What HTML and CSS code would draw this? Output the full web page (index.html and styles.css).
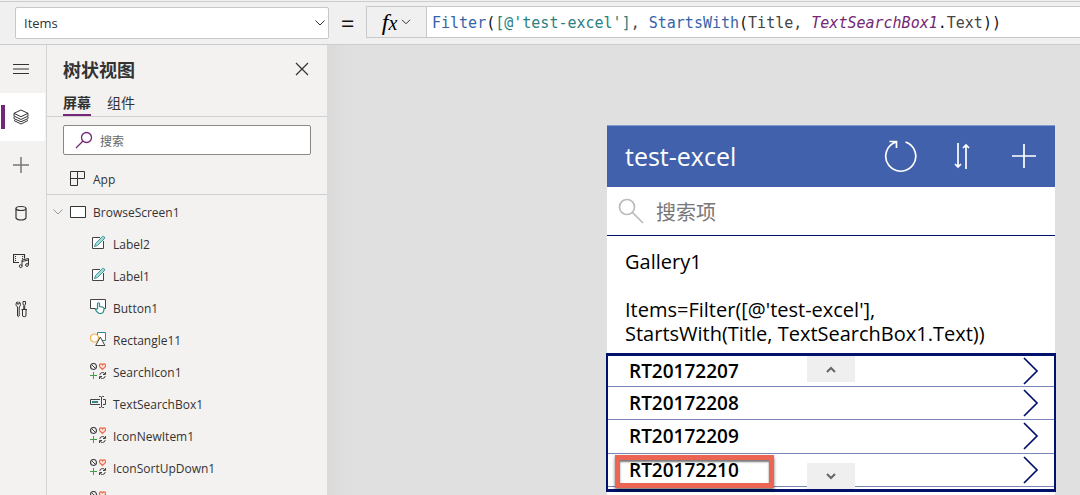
FILE: index.html
```html
<!DOCTYPE html>
<html lang="zh-CN">
<head>
<meta charset="utf-8">
<title>test-excel</title>
<link rel="stylesheet" href="styles.css">
</head>
<body>
<svg class="sprite" aria-hidden="true">
  <symbol id="edit" viewBox="0 0 16 16">
    <path d="M10 2.500H2.500v11h11V6" fill="#fff" stroke="#444"/>
    <path d="M4.500 11.500l1-3L12.500 1.500q1.500-.5 2 .5t-.5 2L7.500 10.500z" fill="#a8d8d8" stroke="#38999b"/>
  </symbol>
  <symbol id="button" viewBox="0 0 16 16">
    <path d="M5.500 9.500H.5v-9h15v9h-2" fill="#fff" stroke="#444"/>
    <path d="M7.500 10V4.500q1-1.500 2 0V7.500l3.500.7q1 .3 1 1.500-.2 4.800-3.500 4.800H9Q6.500 13 5.300 10.200q.5-1 2.200.3" fill="#fff" stroke="#2b8c8c" stroke-width="1.200"/>
  </symbol>
  <symbol id="shapes" viewBox="0 0 16 16">
    <path d="M7.500 1.500h8v8h-8z" fill="#fff" stroke="#2b8c8c"/>
    <circle cx="4.500" cy="7" r="4" fill="#fff" stroke="#f2b04c" stroke-width="1.200"/>
    <path d="M5.700 14.500L10.300 6l4.600 8.500z" fill="#fff" stroke="#444"/>
  </symbol>
  <symbol id="icons" viewBox="0 0 16 16">
    <circle cx="3.500" cy="3.500" r="3" fill="none" stroke="#444" stroke-width="1.200"/>
    <path d="M1.500 1.500l4 4" stroke="#444"/>
    <path d="M12.500 6.500L9.700 3.700Q9 2 10.200 1.100q1.400-.7 2.300.9.900-1.600 2.300-.9Q16 2 15.300 3.700z" fill="#fbe9e4" stroke="#ea6a4a" stroke-width="1.200"/>
    <path d="M3.500 9v7M0 12.500h7" stroke="#4a9b4a"/>
    <path d="M9.700 12q.4-2.500 3-2.500 1.500 0 2.500 1.500M15.500 9v2.500H13M15.300 13q-.4 2.500-3 2.500-1.500 0-2.500-1.500M9.500 16v-2.500H12" fill="none" stroke="#444"/>
  </symbol>
  <symbol id="textbox" viewBox="0 0 16 16">
    <path d="M10 4.500H.5v5H10M13 4.500h2.500v5H13" fill="none" stroke="#444"/>
    <path d="M2 6h6v2H2z" fill="#2b8c8c"/>
    <path d="M9 1.500h1.500l1 .7 1-.7H14M11.500 2v10M9 12.500h1.500l1-.7 1 .7H14" fill="none" stroke="#444"/>
  </symbol>
  <symbol id="next" viewBox="0 0 16 28">
    <path d="M1 1l13 13L1 27" fill="none" stroke="#00126b" stroke-width="1.700"/>
  </symbol>
</svg>

<div class="studio">
  <header class="formula-bar">
    <select class="property" aria-label="属性"><option>Items</option></select>
    <span class="equals">=</span>
    <div class="formula">
      <button class="fx" aria-label="fx"><i>f<small>x</small></i><svg width="10" height="6" viewBox="0 0 10 6"><path d="M1 .8l4 4 4-4" fill="none" stroke="#333"/></svg></button>
      <code class="code" tabindex="0"><span class="fn">Filter</span>(<span class="src">[@'test-excel']</span><span class="id">,</span> <span class="fn">StartsWith</span>(<span class="id">Title,</span> <span class="ctl">TextSearchBox1</span>.<span class="id">Text</span>))</code>
    </div>
  </header>

  <div class="workspace">
    <nav class="rail" aria-label="导航">
      <button aria-label="菜单"><svg width="16" height="16"><path d="M0 3.500h16M0 8h16M0 12.500h16" stroke="#333"/></svg></button>
      <button class="active" aria-label="树状视图"><svg width="16" height="16" fill="none" stroke="#333"><path d="M8 1l7 3.300L8 7.700 1 4.300zM1 4.300V7l7 3.500L15 7V4.300M1 7.700v2l7 3 7-3v-2M1 11.500L8 15l7-3.500"/></svg></button>
      <button aria-label="插入"><svg width="16" height="16"><path d="M8 0v16M0 8h16" stroke="#777" stroke-width="1.500"/></svg></button>
      <button aria-label="数据"><svg width="12" height="16" fill="none" stroke="#333" stroke-width="1.200"><ellipse cx="6" cy="3.500" rx="5" ry="2"/><path d="M1 3.500V13q1 2 5 2t5-2V3.500"/></svg></button>
      <button aria-label="媒体"><svg width="16" height="16" fill="none" stroke="#333"><path d="M6 9.500H.5v-8h11v4" stroke-width="1.200"/><path d="M2.500 3v6M9.500 3v3" stroke-dasharray="1 1"/><path d="M9 13V7l6.500-1.500v6M9 8.500L15.500 7"/><circle cx="7.700" cy="13.200" r="1.400"/><circle cx="14" cy="12" r="1.400"/></svg></button>
      <button aria-label="高级工具"><svg width="12" height="18" fill="none" stroke="#333"><path d="M2.500 7Q1 6 1 4.500T2.200 1.800V4h2V1.800Q5.500 3 5.500 4.500T4.200 7v9q-.9 1.500-1.700 0zM8 1.500h2.500V4L9.700 5.500V9H8.800V5.500L8 4zM6.500 9.500H12M7.500 10v6q1.800 1.500 3.500 0v-6"/></svg></button>
    </nav>

    <aside class="panel">
      <div class="panel-head">
        <h1>树状视图</h1>
        <button aria-label="关闭"><svg width="14" height="14"><path d="M1 1l12 12M13 1L1 13" stroke="#333" stroke-width="1.200"/></svg></button>
      </div>
      <div class="tabs" role="tablist">
        <button class="selected" role="tab" aria-selected="true">屏幕</button>
        <button role="tab" aria-selected="false">组件</button>
      </div>
      <label class="find">
        <svg width="18" height="18" fill="none" stroke="#742774" stroke-width="1.300"><circle cx="11.500" cy="6.500" r="5"/><path d="M8 10l-7 7"/></svg>
        <input type="text" placeholder="搜索" aria-label="搜索">
      </label>
      <div class="app-row"><svg width="16" height="16" fill="none" stroke="#333"><path d="M.5.500h14v7h-7v7h-7zM7.500.500v7h-7"/></svg>App</div>
      <div class="tree">
        <div class="node screen"><svg width="10" height="6"><path d="M.5.500l4.500 4.500L9.500.500" fill="none" stroke="#999"/></svg><svg width="16" height="12"><path d="M.5.500h15v11H.5z" fill="#fff" stroke="#333"/></svg>BrowseScreen1</div>
        <div class="node"><svg class="glyph"><use href="#edit"/></svg>Label2</div>
        <div class="node"><svg class="glyph"><use href="#edit"/></svg>Label1</div>
        <div class="node"><svg class="glyph"><use href="#button"/></svg>Button1</div>
        <div class="node"><svg class="glyph"><use href="#shapes"/></svg>Rectangle11</div>
        <div class="node"><svg class="glyph"><use href="#icons"/></svg>SearchIcon1</div>
        <div class="node"><svg class="glyph"><use href="#textbox"/></svg>TextSearchBox1</div>
        <div class="node"><svg class="glyph"><use href="#icons"/></svg>IconNewItem1</div>
        <div class="node"><svg class="glyph"><use href="#icons"/></svg>IconSortUpDown1</div>
        <div class="node"><svg class="glyph"><use href="#icons"/></svg></div>
      </div>
    </aside>

    <main class="canvas">
      <section class="app">
        <header class="app-bar">
          <h2>test-excel</h2>
          <button aria-label="刷新"><svg width="34" height="34" fill="none" stroke="#fff" stroke-width="1.700"><path d="M21.500 3A15 15 0 1 1 12 3M5.500 2.500h7V9"/></svg></button>
          <button aria-label="排序"><svg width="16" height="28" fill="none" stroke="#fff" stroke-width="1.700"><path d="M4 1v24M1 22l3 3 3-3M12 27V3M9 6l3-3 3 3"/></svg></button>
          <button aria-label="新建"><svg width="24" height="24"><path d="M12 0v24M0 12h24" stroke="#fff" stroke-width="1.700"/></svg></button>
        </header>
        <label class="app-search">
          <svg width="26" height="26" fill="none" stroke="#bbb" stroke-width="1.700"><circle cx="9" cy="9" r="7.500"/><path d="M14.500 14.500L25 25"/></svg>
          <input type="text" placeholder="搜索项" aria-label="搜索项">
        </label>
        <p class="note">Gallery1<br><br>Items=Filter([@'test-excel'],<br>StartsWith(Title, TextSearchBox1.Text))</p>
        <div class="gallery">
          <div class="item">RT20172207<svg class="next"><use href="#next"/></svg></div>
          <div class="item">RT20172208<svg class="next"><use href="#next"/></svg></div>
          <div class="item">RT20172209<svg class="next"><use href="#next"/></svg></div>
          <div class="item">RT20172210<svg class="next"><use href="#next"/></svg></div>
          <button class="scroll up" aria-label="向上"><svg width="10" height="7"><path d="M1 6l4-4 4 4" fill="none" stroke="#666" stroke-width="2"/></svg></button>
          <button class="scroll down" aria-label="向下"><svg width="10" height="7"><path d="M1 1l4 4 4-4" fill="none" stroke="#666" stroke-width="2"/></svg></button>
          <div class="highlight"></div>
        </div>
      </section>
    </main>
  </div>
</div>
</body>
</html>
```
FILE: styles.css
```css
* { box-sizing: border-box; }
body {
  margin: 0;
  color: #333;
  font-family: "Open Sans", "Noto Sans CJK SC", sans-serif;
  font-size: 12px;
}
button {
  display: flex;
  align-items: center;
  justify-content: center;
  padding: 0;
  border: 0;
  background: none;
  color: inherit;
  font: inherit;
}
h1, h2, p { margin: 0; }
svg { flex: none; }
.sprite { position: absolute; width: 0; height: 0; }
.studio {
  display: flex;
  flex-direction: column;
  height: 100vh;
  overflow: hidden;
}

.formula-bar {
  display: flex;
  flex: none;
  align-items: center;
  height: 45px;
  padding: 2px 0 0 15px;
  border-bottom: 1px solid #ccc;
  background: linear-gradient(#ccc, #ccc) 0 1px / 100% 1px no-repeat #f0f0f0;
}
.property {
  width: 314px;
  height: 32px;
  padding: 0 8px;
  border: 1px solid #c8c8c8;
  border-radius: 2px;
  appearance: none;
  background: #fff url("data:image/svg+xml,%3Csvg xmlns='http://www.w3.org/2000/svg' width='10' height='6'%3E%3Cpath d='M.5.5l4.500 4.500L9.500.5' fill='none' stroke='%23333'/%3E%3C/svg%3E") right 3px center no-repeat;
  color: #333;
  font: 13px "Open Sans", sans-serif;
}
.equals {
  width: 37px;
  color: #111;
  font: 24px/24px "Open Sans", sans-serif;
  text-align: center;
}
.formula {
  display: flex;
  flex: 1;
  height: 32px;
  margin-bottom: 2px;
  border: 1px solid #c8c8c8;
  border-right: 0;
  background: #fff;
}
.fx {
  gap: 4px;
  width: 60px;
  border-right: 1px solid #c8c8c8;
  background: #f0f0f0;
  color: #000;
  font: 24px "Liberation Serif", serif;
}
.fx small { font-size: 20px; }
.code {
  padding-left: 5px;
  color: #111;
  font: 15px/32px "DejaVu Sans Mono", monospace;
  white-space: pre;
}
.fn { color: #3564a8; }
.src { color: #2b8080; }
.id { color: #444; }
.ctl { color: #742774; font-style: italic; }

.workspace { display: flex; flex: 1; min-height: 0; }
.rail {
  flex: none;
  width: 47px;
  border-right: 1px solid #d4d4d4;
  background: #f3f2f1;
}
.rail button { width: 45px; height: 48px; padding-right: 3px; }
.rail .active {
  background: linear-gradient(#742774, #742774) 1px 12px / 4px 24px no-repeat #fff;
}
.panel {
  flex: none;
  width: 280px;
  background: #f3f2f1;
  overflow: hidden;
}
.panel-head {
  display: flex;
  align-items: center;
  justify-content: space-between;
  height: 48px;
  padding: 0 18px 0 16px;
}
.panel-head h1 { font: 700 18px/24px "Noto Sans CJK SC", sans-serif; }
.tabs {
  display: flex;
  gap: 16px;
  height: 24px;
  padding: 0 16px;
  border-bottom: 1px solid #d0d0d0;
}
.tabs button {
  height: 23px;
  padding-bottom: 4px;
  border-bottom: 2px solid transparent;
  font: 14px/20px "Noto Sans CJK SC", sans-serif;
}
.tabs .selected { border-color: #742774; font-weight: 700; }
.find {
  display: flex;
  align-items: center;
  gap: 7px;
  height: 30px;
  margin: 8px 16px 0;
  padding: 0 11px;
  border: 1px solid #888;
  border-radius: 2px;
  background: #fff;
}
input {
  flex: 1;
  min-width: 0;
  padding: 0;
  border: 0;
  outline: 0;
  background: none;
  font: 12px "Noto Sans CJK SC", sans-serif;
}
input::placeholder { color: #666; opacity: 1; }
.app-row {
  display: flex;
  align-items: center;
  gap: 7px;
  height: 40px;
  padding: 9px 23px 0;
  border-bottom: 1px solid #d0d0d0;
}
.app-row svg { margin-bottom: 1px; }
.node {
  display: flex;
  align-items: center;
  gap: 7px;
  height: 32px;
  padding: 2px 0 0 43px;
}
.screen { padding-left: 6px; }
.glyph { width: 16px; height: 16px; margin-bottom: 2px; }

.canvas {
  flex: 1;
  min-width: 0;
  padding: 80px 25px 0;
  background: linear-gradient(90deg, #d9d9d9, #e0e0e0 20px);
}
.app {
  display: flex;
  flex-direction: column;
  width: 448px;
  height: 100%;
  margin-left: auto;
  background: #fff;
}
.app-bar {
  display: flex;
  align-items: center;
  height: 62px;
  padding: 0 19px 1px 18px;
  border-top: 1px solid #7f9bcd;
  background: #4161ac;
  color: #fff;
}
.app-bar h2 { flex: 1; font-size: 25px; font-weight: 400; }
.app-bar button:nth-of-type(2) { margin: 0 42px 0 36px; }
.app-search {
  display: flex;
  align-items: center;
  gap: 12px;
  height: 49px;
  padding: 0 11px;
  border-bottom: 1px solid #00126b;
}
.app-search input { font-size: 20px; }
.app-search input::placeholder { color: #777; }
.note {
  padding: 14px 18px 7px;
  color: #000;
  font-size: 20px;
  line-height: 24px;
}
.gallery {
  position: relative;
  display: grid;
  flex: none;
  grid-template-rows: 31px repeat(3, 1fr);
  height: 139px;
  margin: 0 -1px;
  padding-bottom: 2px;
  border: 3px solid #00126b;
  border-width: 3px 2px;
}
.item {
  display: flex;
  align-items: center;
  justify-content: space-between;
  padding: 0 15px 0 21px;
  border-bottom: 1px solid #7a86b8;
  color: #000;
  font-size: 19px;
  font-weight: 600;
  line-height: 24px;
}
.next { width: 16px; height: 28px; }
.scroll {
  position: absolute;
  left: 199px;
  width: 48px;
  height: 26px;
  background: #efefef;
}
.up { top: 0; }
.down { bottom: 0; }
.highlight {
  position: absolute;
  bottom: 1px;
  left: 7px;
  width: 159px;
  height: 33px;
  border: 5px solid #ec6553;
  box-shadow: 0 2px 3px #0008, inset 0 2px 2px #0008;
}
```
